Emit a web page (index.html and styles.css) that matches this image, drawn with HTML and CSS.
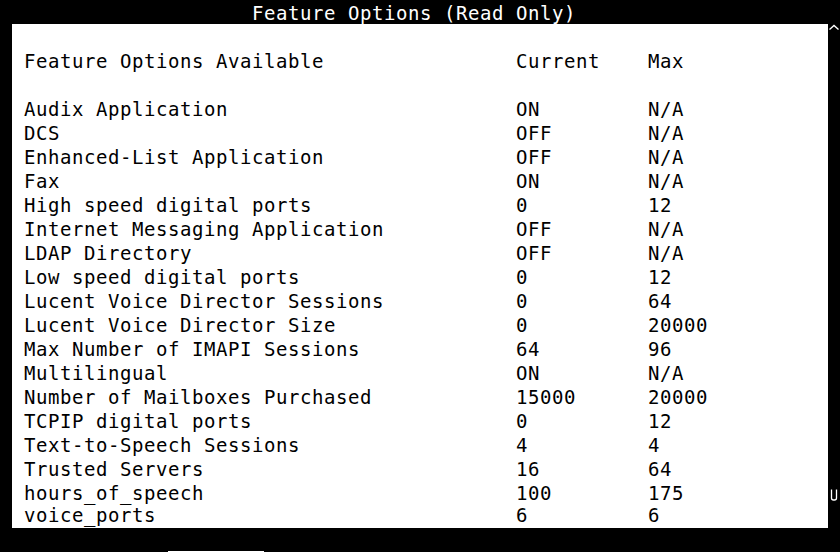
FILE: index.html
```html
<!DOCTYPE html>
<html>
<head>
<meta charset="utf-8">
<link rel="stylesheet" href="styles.css">
</head>
<body>
<div class="screen">
  <div class="title-row"><span class="title">Feature Options (Read Only)</span></div>
  <div class="main">
    <div class="panel">
      <div class="table">
        <div class="row head"><span>Feature Options Available</span><span>Current</span><span>Max</span></div>
        <div class="row blank"><span>&nbsp;</span></div>
        <div class="row"><span>Audix Application</span><span>ON</span><span>N/A</span></div>
        <div class="row"><span>DCS</span><span>OFF</span><span>N/A</span></div>
        <div class="row"><span>Enhanced-List Application</span><span>OFF</span><span>N/A</span></div>
        <div class="row"><span>Fax</span><span>ON</span><span>N/A</span></div>
        <div class="row"><span>High speed digital ports</span><span>0</span><span>12</span></div>
        <div class="row"><span>Internet Messaging Application</span><span>OFF</span><span>N/A</span></div>
        <div class="row"><span>LDAP Directory</span><span>OFF</span><span>N/A</span></div>
        <div class="row"><span>Low speed digital ports</span><span>0</span><span>12</span></div>
        <div class="row"><span>Lucent Voice Director Sessions</span><span>0</span><span>64</span></div>
        <div class="row"><span>Lucent Voice Director Size</span><span>0</span><span>20000</span></div>
        <div class="row"><span>Max Number of IMAPI Sessions</span><span>64</span><span>96</span></div>
        <div class="row"><span>Multilingual</span><span>ON</span><span>N/A</span></div>
        <div class="row"><span>Number of Mailboxes Purchased</span><span>15000</span><span>20000</span></div>
        <div class="row"><span>TCPIP digital ports</span><span>0</span><span>12</span></div>
        <div class="row"><span>Text-to-Speech Sessions</span><span>4</span><span>4</span></div>
        <div class="row"><span>Trusted Servers</span><span>16</span><span>64</span></div>
        <div class="row"><span>hours_of_speech</span><span>100</span><span>175</span></div>
        <div class="row last"><span>voice_ports</span><span>6</span><span>6</span></div>
      </div>
    </div>
    <div class="scroll">
      <svg class="up" width="12" height="8" viewBox="0 0 12 8"><path d="M1.5 5.5 L6 1.5 L10.5 5.5" fill="none" stroke="#fff" stroke-width="1.4"/></svg>
      <svg class="down" width="12" height="12" viewBox="0 0 12 12"><path d="M2.5 0.5 V9 Q2.5 11 4.5 11 H5.5 Q7.5 11 7.5 9 V0.5" fill="none" stroke="#fff" stroke-width="1.3"/></svg>
    </div>
  </div>
  <div class="status"><span class="cursor"></span></div>
</div>
</body>
</html>
```
FILE: styles.css
```css
html, body {
  margin: 0;
  padding: 0;
  background: #000;
}
.screen {
  width: 840px;
  height: 552px;
  background: #000;
  color: #fff;
  font-family: "DejaVu Sans Mono", "Liberation Mono", monospace;
  font-size: 19px;
  letter-spacing: 0.56px;
  line-height: 24px;
  overflow: hidden;
  display: flex;
  flex-direction: column;
}
.title-row {
  height: 24px;
  line-height: 26px;
  padding-left: 252px;
  white-space: pre;
}
.main {
  display: flex;
  height: 504px;
}
.panel {
  margin-left: 12px;
  width: 816px;
  height: 504px;
  background: #fff;
  color: #000;
  box-sizing: border-box;
  padding: 24px 0 0 12px;
}
.row {
  display: grid;
  grid-template-columns: 492px 132px 1fr;
  height: 24px;
  line-height: 26px;
  white-space: pre;
}
.row.last {
  line-height: 22px;
}
.scroll {
  width: 12px;
  display: flex;
  flex-direction: column;
}
.up {
  display: block;
  margin-top: 0;
}
.down {
  display: block;
  margin-top: auto;
  margin-bottom: 27px;
  margin-left: 1px;
}
.status {
  height: 24px;
  display: flex;
  align-items: flex-end;
}
.cursor {
  display: block;
  margin-left: 168px;
  width: 96px;
  height: 1px;
  background: #fff;
}
```
